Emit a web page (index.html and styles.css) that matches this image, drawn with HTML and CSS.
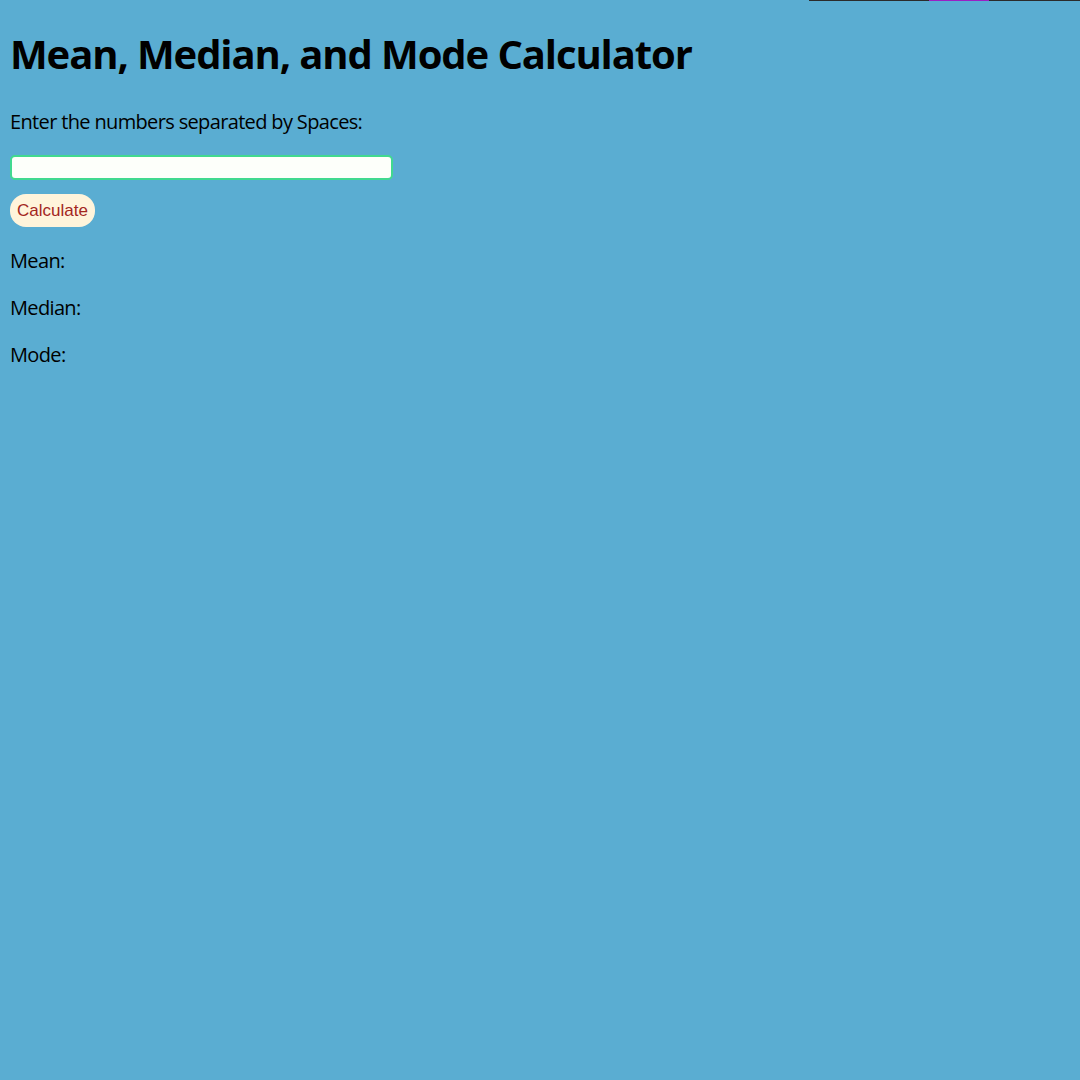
FILE: index.html
```html
<!DOCTYPE html>
<html>
<head>
<meta charset="utf-8">
<title>Mean, Median, and Mode Calculator</title>
<link rel="stylesheet" href="styles.css">
</head>
<body>
<div class="topbar"><span class="seg"></span><span class="seg purple"></span><span class="seg rest"></span></div>
<h1>Mean, Median, and Mode Calculator</h1>
<p class="label">Enter the numbers separated by Spaces:</p>
<input class="nums" type="text">
<button class="calc">Calculate</button>
<p class="result">Mean: </p>
<p class="result">Median: </p>
<p class="result">Mode: </p>
</body>
</html>
```
FILE: styles.css
```css
html { background: #5aadd2; }
body {
  margin: 10px;
  font-family: "Open Sans", "Noto Sans", sans-serif;
  font-size: 20px;
  letter-spacing: -0.65px;
  color: #000;
  background: #5aadd2;
}
h1 {
  font-size: 40px;
  font-weight: 700;
  letter-spacing: -1.1px;
  margin: 16px 0 27px;
}
p { margin: 20px 0; }
.nums {
  display: block;
  box-sizing: border-box;
  width: 383px;
  height: 25px;
  margin: 18px 0 14px;
  border: 2px solid #41d98f;
  border-radius: 5px;
  background: #fdfffa;
  outline: none;
}
.calc {
  display: block;
  height: 33px;
  padding: 0 7px;
  border: none;
  border-radius: 16px;
  background: #fff4db;
  color: #a3261e;
  font-family: "Liberation Sans", Arial, sans-serif;
  font-size: 17px;
  letter-spacing: 0;
}
.topbar {
  position: absolute;
  top: 0;
  left: 809px;
  right: 0;
  height: 1px;
  display: flex;
}
.seg { width: 120px; background: #2b2b2b; }
.seg.purple { width: 60px; background: #9b1fc4; }
.seg.rest { flex: 1; }
```
